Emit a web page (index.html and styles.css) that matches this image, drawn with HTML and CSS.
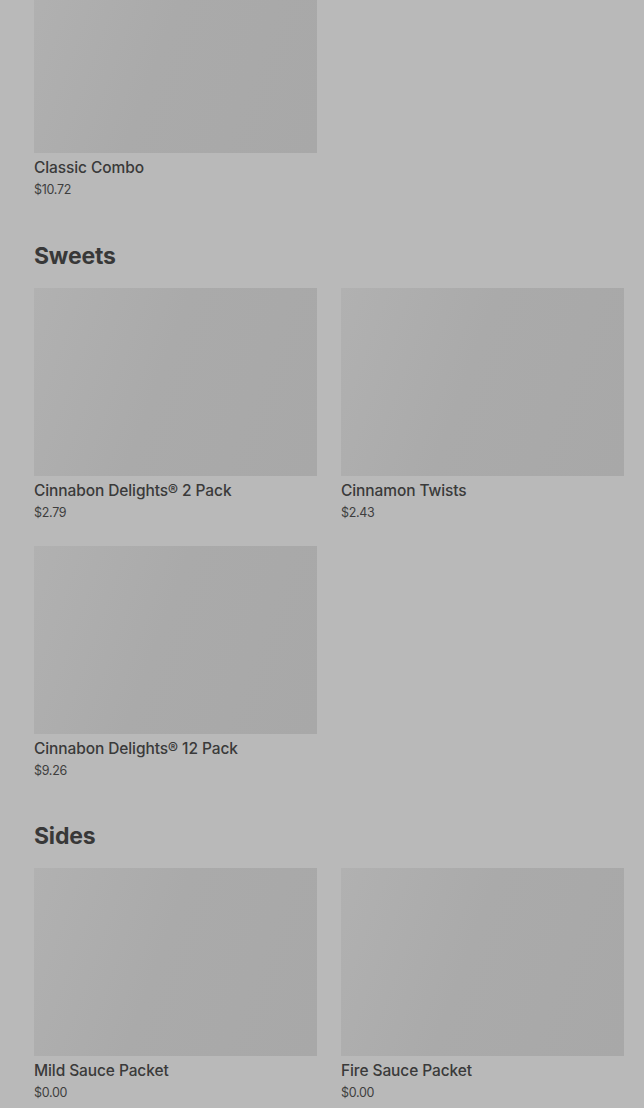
FILE: index.html
```html
<!DOCTYPE html>
<html lang="en">
<head>
<meta charset="utf-8">
<title>Menu</title>
<link rel="stylesheet" href="styles.css">
</head>
<body>
<main class="menu">
  <section class="section first">
    <div class="grid">
      <div class="card">
        <div class="thumb"></div>
        <div class="name">Classic Combo</div>
        <div class="price">$10.72</div>
      </div>
    </div>
  </section>
  <section class="section">
    <h2 class="heading">Sweets</h2>
    <div class="grid">
      <div class="card">
        <div class="thumb"></div>
        <div class="name">Cinnabon Delights® 2 Pack</div>
        <div class="price">$2.79</div>
      </div>
      <div class="card">
        <div class="thumb"></div>
        <div class="name">Cinnamon Twists</div>
        <div class="price">$2.43</div>
      </div>
      <div class="card">
        <div class="thumb"></div>
        <div class="name">Cinnabon Delights® 12 Pack</div>
        <div class="price">$9.26</div>
      </div>
    </div>
  </section>
  <section class="section">
    <h2 class="heading">Sides</h2>
    <div class="grid">
      <div class="card">
        <div class="thumb"></div>
        <div class="name">Mild Sauce Packet</div>
        <div class="price">$0.00</div>
      </div>
      <div class="card">
        <div class="thumb"></div>
        <div class="name">Fire Sauce Packet</div>
        <div class="price">$0.00</div>
      </div>
    </div>
  </section>
</main>
</body>
</html>
```
FILE: styles.css
```css
html, body {
  margin: 0;
  padding: 0;
  background: #b9b9b9;
  overflow: hidden;
}
body {
  font-family: Inter, "Noto Sans", "Liberation Sans", sans-serif;
  color: #393939;
}
.menu {
  padding: 0 20px 0 34px;
  margin-top: -35px;
  display: flex;
  flex-direction: column;
  gap: 39px;
}
.first {
  margin-bottom: 1px;
}
.heading {
  margin: 0 0 16px;
  font-size: 23px;
  line-height: 32px;
  font-weight: 700;
  color: #383838;
  letter-spacing: -0.2px;
}
.grid {
  display: grid;
  grid-template-columns: 283px 283px;
  column-gap: 24px;
  row-gap: 23px;
}
.card {
  display: flex;
  flex-direction: column;
}
.thumb {
  height: 188px;
  background: linear-gradient(110deg, #b1b1b1 0%, #aaaaaa 45%, #a8a8a8 100%);
}
.name {
  margin-top: 4px;
  font-size: 15.5px;
  line-height: 22px;
  font-weight: 500;
  color: #3a3a3a;
  letter-spacing: -0.1px;
}
.price {
  margin-top: 1px;
  font-size: 12.5px;
  line-height: 20px;
  color: #3e3e3e;
  letter-spacing: -0.3px;
}
```
